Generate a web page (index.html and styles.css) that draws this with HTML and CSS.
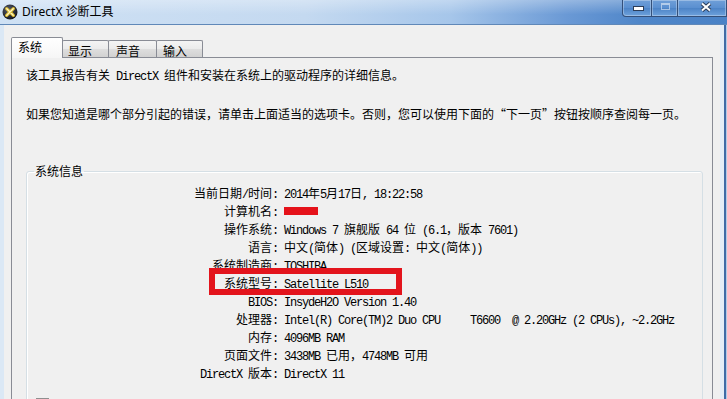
FILE: index.html
```html
<!DOCTYPE html>
<html lang="zh-CN">
<head>
<meta charset="utf-8">
<title>DirectX 诊断工具</title>
<link rel="stylesheet" href="styles.css">
</head>
<body>
<div class="window">
  <div class="titlebar">
    <svg class="app-icon" viewBox="0 0 16 16">
      <defs>
        <radialGradient id="ig" cx="40%" cy="35%" r="70%">
          <stop offset="0" stop-color="#5a6070"/>
          <stop offset="1" stop-color="#101218"/>
        </radialGradient>
      </defs>
      <circle cx="8" cy="8" r="7.5" fill="url(#ig)"/>
      <path d="M4.6 4.6 L11.4 11.4 M11.4 4.6 L4.6 11.4" stroke="#d9b72a" stroke-width="3.2" stroke-linecap="round"/>
      <path d="M4.8 4.8 L11.2 11.2 M11.2 4.8 L4.8 11.2" stroke="#fff7c2" stroke-width="1.3" stroke-linecap="round"/>
    </svg>
    <span class="title">DirectX 诊断工具</span>
    <div class="caption">
      <div class="cbtn min"><span class="min-glyph"></span></div>
      <div class="cbtn max"><span class="max-glyph"></span></div>
      <div class="cbtn close">
        <svg class="close-glyph" width="12" height="10" viewBox="0 0 12 10">
          <path d="M2 1.5 L10 8.5 M10 1.5 L2 8.5" stroke="#2c3d58" stroke-width="4"/>
          <path d="M2 1.5 L10 8.5 M10 1.5 L2 8.5" stroke="#ffffff" stroke-width="2"/>
        </svg>
      </div>
    </div>
  </div>
  <div class="frame">
    <div class="client">
      <div class="tabs">
        <div class="tab active">系统</div>
        <div class="tab t2">显示</div>
        <div class="tab t3">声音</div>
        <div class="tab t4">输入</div>
      </div>
      <div class="panel">
        <p>该工具报告有关<span class="m"> DirectX </span>组件和安装在系统上的驱动程序的详细信息。</p>
        <p class="p2">如果您知道是哪个部分引起的错误，请单击上面适当的选项卡。否则，您可以使用下面的“下一页”按钮按顺序查阅每一页。</p>
        <fieldset class="group">
          <legend>系统信息</legend>
          <div class="row"><span class="lbl">当前日期<span class="m">/</span>时间<span class="m">:</span></span><span class="val"><span class="m">2014</span>年<span class="m">5</span>月<span class="m">17</span>日<span class="m">, 18:22:58</span></span></div>
          <div class="row"><span class="lbl">计算机名<span class="m">:</span></span><span class="val"><span class="redact"></span></span></div>
          <div class="row"><span class="lbl">操作系统<span class="m">:</span></span><span class="val"><span class="m">Windows 7 </span>旗舰版<span class="m"> 64 </span>位<span class="m"> (6.1</span>，版本<span class="m"> 7601)</span></span></div>
          <div class="row"><span class="lbl">语言<span class="m">:</span></span><span class="val">中文<span class="m">(</span>简体<span class="m">) (</span>区域设置<span class="m">: </span>中文<span class="m">(</span>简体<span class="m">))</span></span></div>
          <div class="row"><span class="lbl">系统制造商<span class="m">:</span></span><span class="val"><span class="m">TOSHIBA</span></span></div>
          <div class="row marked"><span class="lbl">系统型号<span class="m">:</span></span><span class="val"><span class="m">Satellite L510</span></span></div>
          <div class="row"><span class="lbl"><span class="m">BIOS:</span></span><span class="val"><span class="m">InsydeH2O Version 1.40</span></span></div>
          <div class="row"><span class="lbl">处理器<span class="m">:</span></span><span class="val"><span class="m">Intel(R) Core(TM)2 Duo CPU     T6600  @ 2.20GHz (2 CPUs), ~2.2GHz</span></span></div>
          <div class="row"><span class="lbl">内存<span class="m">:</span></span><span class="val"><span class="m">4096MB RAM</span></span></div>
          <div class="row"><span class="lbl">页面文件<span class="m">:</span></span><span class="val"><span class="m">3438MB </span>已用，<span class="m">4748MB </span>可用</span></div>
          <div class="row"><span class="lbl"><span class="m">DirectX </span>版本<span class="m">:</span></span><span class="val"><span class="m">DirectX 11</span></span></div>
          <div class="check"><span class="box"></span><span class="check-text">检查<span class="m"> WHQL </span>数字签名<span class="m">(C)</span></span></div>
        </fieldset>
      </div>
    </div>
    <div class="rframe"></div>
  </div>
</div>
</body>
</html>
```
FILE: styles.css
```css
*, *::before, *::after { box-sizing: border-box; }
html, body { margin: 0; padding: 0; }
body {
  width: 727px;
  height: 399px;
  overflow: hidden;
  font-family: "Noto Sans CJK SC", sans-serif;
  font-size: 12px;
  color: #000;
  background: #f0f0f0;
}
.window {
  width: 727px;
  height: 399px;
  display: flex;
  flex-direction: column;
  overflow: hidden;
}
.titlebar {
  flex: none;
  height: 25px;
  display: flex;
  align-items: flex-start;
  border-bottom: 1px solid #6088b8;
  background:
    linear-gradient(to bottom, rgba(255,255,255,0.3), rgba(255,255,255,0) 60%),
    linear-gradient(to right, #cfe1f4 0%, #c4d9f0 42%, #a6c6ea 62%, #6a99d5 78%, #4f86c9 88%, #4a82c6 100%);
}
.app-icon {
  flex: none;
  width: 16px;
  height: 16px;
  margin: 4px 0 0 2px;
}
.title {
  margin: 4px 0 0 4px;
  line-height: 16px;
  font-family: "Noto Sans", "Noto Sans CJK SC", sans-serif;
  font-size: 12px;
  color: #000;
}
.caption {
  margin-left: auto;
  display: flex;
  height: 17px;
}
.cbtn {
  height: 17px;
  border: 1px solid #34507a;
  border-top: none;
  background: linear-gradient(to bottom, #6f9fd8, #5a8fd0 50%, #4c83c6 51%, #6ea2dc);
  box-shadow: inset 0 0 0 1px rgba(255,255,255,0.3);
  display: flex;
  justify-content: center;
  align-items: flex-start;
}
.min { width: 30px; border-bottom-left-radius: 4px; padding-top: 6px; }
.max { width: 27px; margin-left: -1px; padding-top: 3px; }
.close { width: 50px; margin-left: -1px; padding-top: 2px; }
.min-glyph {
  width: 11px;
  height: 5px;
  background: #fff;
  border: 1px solid #2c3d58;
  margin-left: 2px;
}
.max-glyph {
  width: 9px;
  height: 7px;
  border: 1px solid rgba(255,255,255,0.5);
  border-top-width: 2px;
  margin-left: 2px;
}
.close-glyph { margin-left: 7px; }

.frame {
  flex: 1;
  min-height: 0;
  display: flex;
  padding-left: 4px;
  background: #dbe8f5;
}
.client {
  flex: 1;
  min-width: 0;
  background: #f0f0f0;
  padding: 12px 7px 0 7px;
  overflow: hidden;
}
.rframe {
  flex: none;
  width: 7px;
  background: linear-gradient(to right, #e4edf6 0 4px, #3f6ba6 4px 6px, #b0cbe8 6px);
}

.tabs {
  display: flex;
  align-items: flex-end;
  height: 20px;
  position: relative;
  z-index: 2;
}
.tab {
  height: 17px;
  margin-left: -1px;
  border: 1px solid #898c95;
  border-bottom: none;
  border-radius: 2px 2px 0 0;
  line-height: 16px;
  padding: 2px 0 0 5px;
  background: linear-gradient(to bottom, #f4f4f4, #ebebeb 50%, #dedede 51%, #d2d2d2);
  white-space: nowrap;
}
.tab.active {
  margin-left: 0;
  height: 21px;
  margin-bottom: -1px;
  width: 52px;
  padding: 1px 0 0 6px;
  background: linear-gradient(to bottom, #ffffff, #f6f6f6);
  position: relative;
  z-index: 1;
}
.t2 { width: 47px; }
.t3 { width: 49px; padding-left: 7px; }
.t4 { width: 47px; padding-left: 6px; }

.panel {
  height: 400px;
  border: 1px solid #898c95;
  background: #f0f0f0;
  padding: 9px 9px 0 14px;
}
.panel p {
  margin: 0;
  line-height: 16px;
  white-space: nowrap;
}
.panel .p2 { margin-top: 21px; }

.group {
  width: 677px;
  min-width: 0;
  margin: 41px 0 0;
  padding: 5px 0 0;
  border: 1px solid #d5dfe5;
  border-radius: 3px;
  box-shadow: inset 1px 1px 0 #fff;
}
.group legend {
  margin-left: 7px;
  padding: 0 1px;
  line-height: 16px;
}
.row {
  display: grid;
  grid-template-columns: 251px 1fr;
  column-gap: 6px;
  height: 18px;
  line-height: 18px;
  white-space: nowrap;
}
.lbl { text-align: right; }
.val { white-space: pre; }
.m {
  font-family: "Liberation Mono", monospace;
  font-size: 12px;
  letter-spacing: -1.2px;
  white-space: pre;
}
.redact {
  display: inline-block;
  vertical-align: top;
  margin-top: 5px;
  width: 34px;
  height: 8px;
  background: #e5121a;
}
.marked { position: relative; }
.marked::after {
  content: "";
  position: absolute;
  left: 182px;
  top: -6px;
  width: 193px;
  height: 27px;
  border: 6px solid #e3141c;
}
.check {
  display: flex;
  align-items: flex-start;
  gap: 6px;
  margin: 16px 0 0 9px;
  line-height: 16px;
}
.box {
  width: 13px;
  height: 13px;
  border: 1px solid #8e8f8f;
  background: linear-gradient(to bottom, #dcdcdc, #f6f6f6);
  box-shadow: inset 0 0 0 1px #f4f4f4;
}
.check-text { margin-top: 0; }
```
